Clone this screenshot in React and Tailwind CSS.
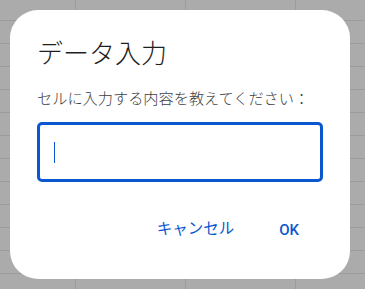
import React from "react";

const rows = Array.from({ length: 12 });

function SheetBackdrop() {
  return (
    <div className="flex flex-col">
      <div className="flex h-[21px] border-b border-[#9b9b9b]">
        <div className="w-[76px] border-r border-[#9b9b9b]" />
        <div className="w-[110px] border-r border-[#9b9b9b]" />
        <div className="w-[110px] border-r border-[#9b9b9b]" />
        <div className="flex-1" />
      </div>
      {rows.map((_, i) => (
        <div key={i} className="flex h-[23px] border-b border-[#9b9b9b]">
          <div className="w-[76px] border-r border-[#9b9b9b]" />
          <div className="w-[110px] border-r border-[#9b9b9b]" />
          <div className="w-[110px] border-r border-[#9b9b9b]" />
          <div className="flex-1" />
        </div>
      ))}
    </div>
  );
}

export default function App() {
  return (
    <div className="relative h-[289px] w-[365px] overflow-hidden bg-[#ababab] font-['Roboto','Noto_Sans_CJK_JP',sans-serif]">
      <SheetBackdrop />

      {/* Prompt dialog */}
      <div className="absolute left-[10px] top-[10px] flex h-[269px] w-[340px] flex-col rounded-[28px] bg-white pl-[27px] pr-[27px] pt-[28px]">
        <h2 className="text-[26px] leading-[32px] font-light text-[#1f1f1f]">データ入力</h2>
        <p className="mt-[19px] text-[15.2px] leading-[20px] font-light text-[#3c4043]">
          セルに入力する内容を教えてください：
        </p>
        <div className="mt-[13px] flex h-[60px] w-[286px] items-center rounded-[5px] border-[3px] border-[#0b57d0] pl-[14px]">
          <span className="h-[21px] w-px bg-[#0b57d0]" />
        </div>
        <div className="mt-[28px] mr-[12px] flex justify-end gap-[21px]">
          <button className="h-[40px] px-[12px] text-[15.5px] text-[#0b57d0]">キャンセル</button>
          <button className="h-[40px] px-[12px] text-[15px] font-medium text-[#0b57d0]">OK</button>
        </div>
      </div>
    </div>
  );
}
